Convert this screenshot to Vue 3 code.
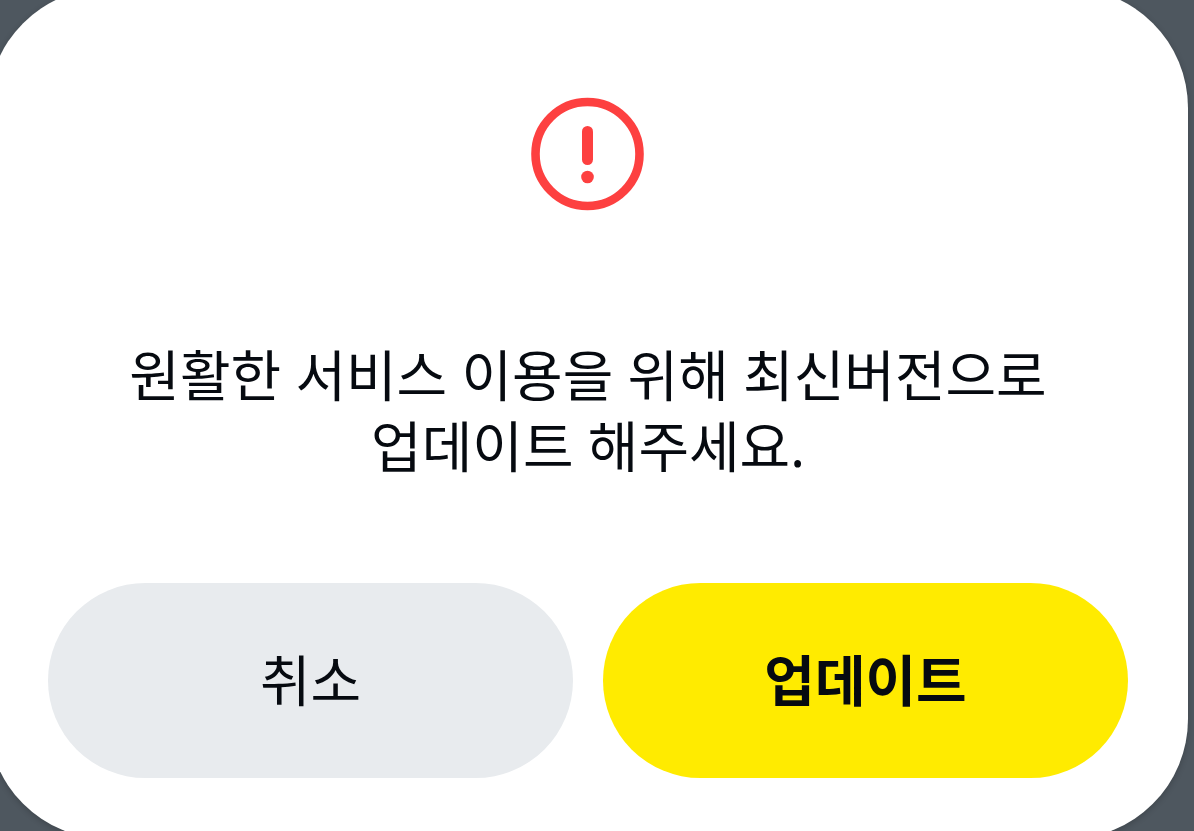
<template>
  <main class="backdrop">
    <section class="dialog" role="alertdialog" aria-labelledby="message">
      <svg class="icon" viewBox="0 0 114 114" aria-hidden="true">
        <circle cx="56.5" cy="57" r="52" fill="none" stroke="#fd4040" stroke-width="8.6" />
        <path d="M56.5 34.5V62.5" fill="none" stroke="#fd4040" stroke-width="11" stroke-linecap="round" />
        <circle cx="56.5" cy="80" r="6.3" fill="#fd4040" />
      </svg>
      <p id="message" class="message">원활한 서비스 이용을 위해 최신버전으로<br />업데이트 해주세요.</p>
      <div class="actions">
        <button type="button" class="button cancel">취소</button>
        <button type="button" class="button update">업데이트</button>
      </div>
    </section>
  </main>
</template>

<script setup>
</script>

<style>
body {
  background: #4e575f;
}
</style>

<style scoped>
.backdrop {
  box-sizing: border-box;
  min-height: 100vh;
  padding-right: 6px;
  overflow: hidden;
  display: flex;
  background: #4e575f;
  font-family: "Noto Sans", "Noto Sans CJK KR", sans-serif;
}

.dialog {
  box-sizing: border-box;
  flex: 1;
  margin: -12px 0 -8px -12px;
  padding: 109px 60px 61px;
  border-radius: 120px;
  background: #fff;
  box-shadow: 0 2px 6px rgba(0, 0, 0, 0.2);
  display: flex;
  flex-direction: column;
  align-items: center;
}

.icon {
  width: 114px;
  height: 114px;
}

.message {
  margin: 128px 0 102px;
  color: #060a10;
  font-size: 55px;
  line-height: 71px;
  text-align: center;
}

.actions {
  display: grid;
  grid-template-columns: 1fr 1fr;
  gap: 30px;
  width: 100%;
}

.button {
  height: 195px;
  padding: 0 0 8px;
  border: 0;
  border-radius: 98px;
  color: #060a10;
  font: inherit;
  font-size: 55px;
  cursor: pointer;
}

.cancel {
  background: #e8ebee;
}

.update {
  background: #ffeb00;
  font-weight: 700;
}
</style>
